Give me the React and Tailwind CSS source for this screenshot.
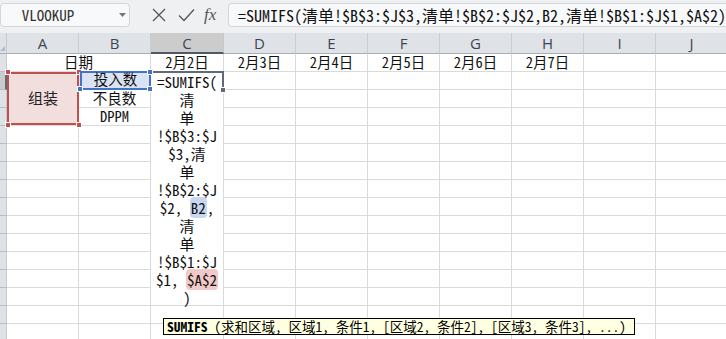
import React from 'react';

const MONO = "font-['Noto_Sans_Mono_CJK_SC','Liberation_Mono','Noto_Sans_CJK_SC',monospace]";
const COLS = ['A', 'B', 'C', 'D', 'E', 'F', 'G', 'H', 'I', 'J'];
const DATES = ['2月2日', '2月3日', '2月4日', '2月5日', '2月6日', '2月7日'];
const GRID = 'border-r border-b border-[#dadada]';
const ROWS = 16;

function Handle({ className }) {
  return <span className={`absolute w-[6px] h-[6px] border border-white ${className}`} />;
}

function RowHead({ active }) {
  return active ? (
    <div className="bg-[#c9cbcd] border-b border-[#b5babf] border-r-2 border-r-[#5f6b78]" />
  ) : (
    <div className="bg-[#dfe3e8] border-b border-[#b9bec4] border-r border-r-[#c4c9ce]" />
  );
}

function Cell({ children, className = '' }) {
  return (
    <div className={`${GRID} flex items-end justify-center pb-[1px] text-[14.5px] leading-[16px] text-[#111] ${MONO} ${className}`}>
      {children}
    </div>
  );
}

function Editor() {
  const lines = [
    '=SUMIFS(',
    '清',
    '单',
    '!$B$3:$J',
    '$3,清',
    '单',
    '!$B$2:$J',
    <>$2, <span className="bg-[#c8d6f2] rounded-[4px] px-[1px]">B2</span>,</>,
    '清',
    '单',
    '!$B$1:$J',
    <>$1, <span className="bg-[#f1c9c9] rounded-[4px] px-[1px]">$A$2</span></>,
    ')',
  ];
  return (
    <div className={`row-span-13 relative z-10 bg-white ${GRID}`}>
      <div className={`pt-[1px] flex flex-col items-center text-[15px] leading-[18px] text-[#111] whitespace-pre ${MONO}`}>
        {lines.map((l, i) => (
          <div key={i}>{l}</div>
        ))}
      </div>
      <div className="absolute -top-[1px] -left-[1px] -right-[1px] h-[19px] border-t-2 border-r-2 border-[#5f6b78]" />
      <span className="absolute -right-[3px] top-[15px] w-[6px] h-[6px] bg-[#5f6b78] border border-white" />
    </div>
  );
}

function Sheet() {
  const cells = [];
  // header row
  cells.push(
    <div key="corner" className="bg-[#dfe3e8] border-b border-[#a9aeb4] border-r border-r-[#c4c9ce] relative">
      <span className="absolute left-0 bottom-[2px] w-0 h-0 border-l-[5px] border-l-transparent border-b-[5px] border-b-[#b4b9be]" />
    </div>
  );
  COLS.forEach((c) =>
    cells.push(
      <div
        key={'h' + c}
        className={
          c === 'C'
            ? "bg-[#cccccc] border-b-2 border-[#4f5a66] border-r border-r-[#c4c9ce] flex items-center justify-center pt-[1px] text-[15px] text-[#3b4652] font-['Open_Sans',sans-serif]"
            : "bg-[#dfe3e8] border-b border-[#a9aeb4] border-r border-r-[#c9ced3] flex items-center justify-center pt-[1px] text-[15px] text-[#3b4652] font-['Open_Sans',sans-serif]"
        }
      >
        {c}
      </div>
    )
  );
  // row 1
  cells.push(<RowHead key="r1" />);
  cells.push(
    <Cell key="a1" className="col-span-2">
      日期
    </Cell>
  );
  DATES.forEach((d) => cells.push(<Cell key={'d' + d}>{d}</Cell>));
  cells.push(<Cell key="i1" />, <Cell key="j1" />);
  // row 2
  cells.push(<RowHead key="r2" active />);
  cells.push(
    <div key="a2" className={`row-span-3 relative z-10 ${GRID} bg-[#f2dedd]`}>
      <div className={`absolute inset-0 -right-[1px] border-2 border-[#c0504d] flex items-center justify-center text-[15px] text-[#222] ${MONO}`}>
        组装
      </div>
      <Handle className="bg-[#c0504d] -left-[2px] -top-[3px]" />
      <Handle className="bg-[#c0504d] -right-[4px] -top-[3px]" />
      <Handle className="bg-[#c0504d] -left-[2px] -bottom-[3px]" />
      <Handle className="bg-[#c0504d] -right-[4px] -bottom-[3px]" />
    </div>
  );
  cells.push(
    <div key="b2" className={`relative z-20 ${GRID} bg-[#dae3f3]`}>
      <div className={`absolute -top-[1px] left-[1px] -right-[1px] -bottom-[1px] border-2 border-[#4472c4] flex items-end justify-center pb-[1px] text-[14.5px] leading-[16px] text-[#111] ${MONO}`}>
        投入数
      </div>
      <Handle className="bg-[#4472c4] -right-[3px] -top-[3px]" />
      <Handle className="bg-[#4472c4] -right-[3px] -bottom-[3px]" />
      <Handle className="bg-[#4472c4] -left-[2px] -bottom-[3px]" />
    </div>
  );
  cells.push(<Editor key="c2" />);
  for (let k = 0; k < 7; k++) cells.push(<Cell key={'r2c' + k} />);
  // rows 3..16
  for (let r = 3; r <= ROWS; r++) {
    cells.push(<RowHead key={'r' + r} />);
    if (r >= 5) cells.push(<Cell key={r + 'A'} />);
    if (r === 3) cells.push(<Cell key="b3">不良数</Cell>);
    else if (r === 4) cells.push(<Cell key="b4">DPPM</Cell>);
    else cells.push(<Cell key={r + 'B'} />);
    if (r > 14) cells.push(<Cell key={r + 'C'} />);
    for (let k = 0; k < 7; k++) cells.push(<Cell key={r + 'x' + k} />);
  }
  return (
    <div className="grid grid-cols-[7px_72px_72px_73px_72px_72px_72px_72px_72px_72px_72px] grid-rows-[21px_repeat(16,18px)]">
      {cells}
    </div>
  );
}

export default function App() {
  return (
    <div className="relative w-[726px] h-[339px] overflow-hidden bg-white">
      <div className="h-[33px] bg-[#eef0f2] flex items-start pt-[3px]">
        <div className="w-[130px] h-[24px] shrink-0 rounded-[4px] border border-[#d3d6d9] bg-[#f8f9fa] flex items-center">
          <span className={`flex-1 text-center pr-[24px] text-[15px] text-[#333] ${MONO}`}>VLOOKUP</span>
          <svg width="7" height="4" className="mr-[3px]">
            <path d="M0 0h7L3.5 4z" fill="#777" />
          </svg>
        </div>
        <div className="w-[98px] h-[24px] shrink-0 flex items-center pl-[22px]">
          <svg width="14" height="14" viewBox="0 0 14 14" className="mr-[12px]">
            <path d="M1 1L13 13M13 1L1 13" stroke="#555" strokeWidth="1.3" fill="none" />
          </svg>
          <svg width="17" height="14" viewBox="0 0 17 14" className="mr-[9px]">
            <path d="M1 7.5L6 12.5L16 1.5" stroke="#555" strokeWidth="1.3" fill="none" />
          </svg>
          <span className="italic text-[17px] leading-[20px] text-[#555] font-['Liberation_Serif',serif]">fx</span>
        </div>
        <div className={`flex-1 h-[24px] rounded-l-[4px] border border-r-0 border-[#d3d6d9] bg-[#f8f9fa] flex items-center pl-[9px] text-[16px] text-[#111] whitespace-nowrap ${MONO}`}>
          =SUMIFS(清单!$B$3:$J$3,清单!$B$2:$J$2,B2,清单!$B$1:$J$1,$A$2)
        </div>
      </div>
      <Sheet />
      <div className={`absolute left-[163px] top-[318px] w-[472px] h-[17px] bg-[#ffffe1] border border-black flex items-center pl-[3px] text-[13.5px] leading-[15px] text-black whitespace-pre z-30 ${MONO}`}>
        <span className="font-bold">SUMIFS</span> (求和区域, 区域1, 条件1, [区域2, 条件2], [区域3, 条件3], ...)
      </div>
    </div>
  );
}
